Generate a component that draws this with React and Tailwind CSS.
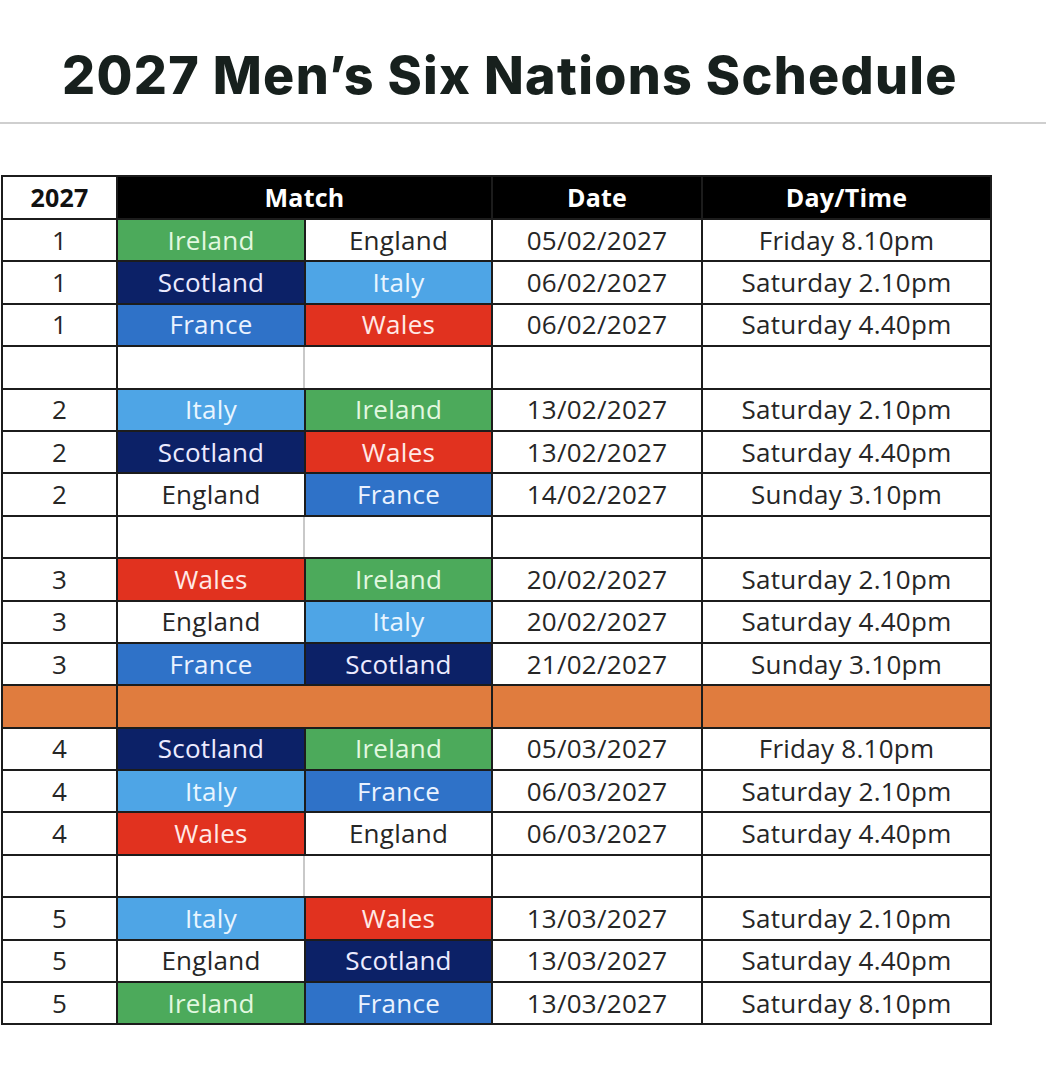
import React from "react";

const TEAM = {
  Ireland: "bg-[#4caa5b] text-[#e2f8e0]",
  England: "bg-white text-[#262626]",
  Scotland: "bg-[#0c2167] text-[#ecebff]",
  Italy: "bg-[#4ea5e6] text-[#e9f5ff]",
  France: "bg-[#2f72c8] text-[#eaf2ff]",
  Wales: "bg-[#e1321f] text-[#ffe9e6]",
};

const rows = [
  [1, "Ireland", "England", "05/02/2027", "Friday 8.10pm"],
  [1, "Scotland", "Italy", "06/02/2027", "Saturday 2.10pm"],
  [1, "France", "Wales", "06/02/2027", "Saturday 4.40pm"],
  "blank",
  [2, "Italy", "Ireland", "13/02/2027", "Saturday 2.10pm"],
  [2, "Scotland", "Wales", "13/02/2027", "Saturday 4.40pm"],
  [2, "England", "France", "14/02/2027", "Sunday 3.10pm"],
  "blank",
  [3, "Wales", "Ireland", "20/02/2027", "Saturday 2.10pm"],
  [3, "England", "Italy", "20/02/2027", "Saturday 4.40pm"],
  [3, "France", "Scotland", "21/02/2027", "Sunday 3.10pm"],
  "orange",
  [4, "Scotland", "Ireland", "05/03/2027", "Friday 8.10pm"],
  [4, "Italy", "France", "06/03/2027", "Saturday 2.10pm"],
  [4, "Wales", "England", "06/03/2027", "Saturday 4.40pm"],
  "blank",
  [5, "Italy", "Wales", "13/03/2027", "Saturday 2.10pm"],
  [5, "England", "Scotland", "13/03/2027", "Saturday 4.40pm"],
  [5, "Ireland", "France", "13/03/2027", "Saturday 8.10pm"],
];

const cell = "flex items-center justify-center h-[40.4px]";
const head = "flex items-center justify-center h-[41px] font-bold text-[25px] tracking-[0.01em]";

export default function App() {
  return (
    <div className="w-[1046px] h-[1084px] bg-white overflow-hidden">
      <div className="h-[122px] pt-[50px] pl-[62px]">
        <h1
          className="text-[52px] leading-[52px] font-extrabold text-[#17201d] tracking-[0.025em] whitespace-nowrap"
          style={{ fontFamily: "Inter, 'Liberation Sans', sans-serif" }}
        >
          2027 Men’s Six Nations Schedule
        </h1>
      </div>
      <div className="h-[2px] bg-[#cfcfcf]" />
      <div className="pt-[51px] pl-[1px]">
        <div
          className="w-[991px] grid grid-cols-[113px_186px_185px_208px_287px] gap-[2px] bg-[#1c1c1c] border-2 border-[#1c1c1c] text-[26px] font-medium tracking-[0.01em] text-[#262626]"
          style={{ fontFamily: "'Open Sans', 'Noto Sans', sans-serif" }}
        >
          <div className={`${head} bg-white text-[#111]`}>2027</div>
          <div className={`${head} col-span-2 bg-black text-white`}>Match</div>
          <div className={`${head} bg-black text-white`}>Date</div>
          <div className={`${head} bg-black text-white`}>Day/Time</div>
          {rows.map((r, i) => {
            if (r === "blank") {
              return (
                <React.Fragment key={i}>
                  <div className={`${cell} bg-white`} />
                  <div className="col-span-2 flex h-[40.4px] bg-white">
                    <div className="w-[187px] h-full border-r-2 border-[#c9c9c9]" />
                    <div className="flex-1 h-full" />
                  </div>
                  <div className={`${cell} bg-white`} />
                  <div className={`${cell} bg-white`} />
                </React.Fragment>
              );
            }
            if (r === "orange") {
              return (
                <React.Fragment key={i}>
                  <div className={`${cell} bg-[#e07c3e]`} />
                  <div className="col-span-2 flex h-[40.4px] bg-[#e07c3e]" />
                  <div className={`${cell} bg-[#e07c3e]`} />
                  <div className={`${cell} bg-[#e07c3e]`} />
                </React.Fragment>
              );
            }
            const [n, a, b, d, t] = r;
            return (
              <React.Fragment key={i}>
                <div className={`${cell} bg-white`}>{n}</div>
                <div className={`${cell} ${TEAM[a]}`}>{a}</div>
                <div className={`${cell} ${TEAM[b]}`}>{b}</div>
                <div className={`${cell} bg-white`}>{d}</div>
                <div className={`${cell} bg-white`}>{t}</div>
              </React.Fragment>
            );
          })}
        </div>
      </div>
    </div>
  );
}
